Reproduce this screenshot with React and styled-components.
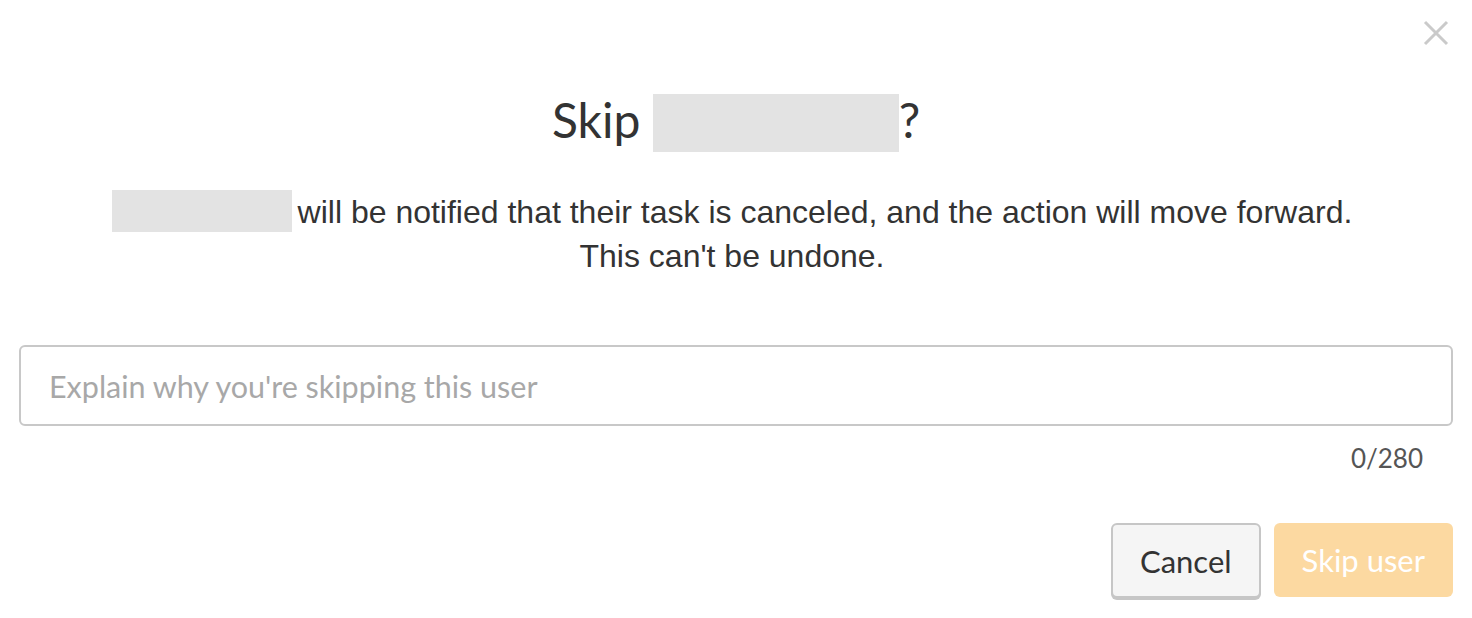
import React, { useState } from "react"
import styled, { createGlobalStyle } from "styled-components"

const Global = createGlobalStyle`
  html, body {
    margin: 0;
    padding: 0;
    background: #fff;
  }
  * {
    box-sizing: border-box;
  }
`

const Dialog = styled.div`
  position: relative;
  width: 1472px;
  height: 618px;
  padding: 0 19px;
  background: #fff;
  font-family: Lato, "Liberation Sans", sans-serif;
  color: #333;
`

const CloseButton = styled.button`
  position: absolute;
  top: 20px;
  right: 23px;
  width: 26px;
  height: 26px;
  padding: 0;
  border: none;
  background: none;
  cursor: pointer;
  svg {
    display: block;
  }
`

const Title = styled.h1`
  margin: 0;
  padding-top: 84px;
  font-family: Lato, sans-serif;
  font-weight: 400;
  font-size: 48px;
  line-height: 72px;
  text-align: center;
  color: #333;
`

const Redacted = styled.span`
  display: inline-block;
  width: ${(p) => p.$w}px;
  height: ${(p) => p.$h}px;
  margin-right: ${(p) => p.$gap || 0}px;
  vertical-align: ${(p) => p.$drop}px;
  background: #e3e3e3;
`

const Message = styled.p`
  margin: 34px 0 0;
  padding-right: 8px;
  font-family: "Liberation Sans", Arial, sans-serif;
  font-size: 32px;
  line-height: 44px;
  text-align: center;
  color: #333;
`

const Field = styled.input`
  display: block;
  width: 100%;
  height: 81px;
  margin-top: 67px;
  padding: 0 28px;
  border: 2px solid #c8c8c8;
  border-radius: 6px;
  font-family: Lato, sans-serif;
  font-size: 30.5px;
  color: #333;
  outline: none;
  &::placeholder {
    color: #a8a8a8;
  }
`

const Counter = styled.div`
  padding: 16px 30px 0 0;
  font-family: Lato, sans-serif;
  font-size: 26px;
  line-height: 32px;
  text-align: right;
  color: #555;
`

const Actions = styled.div`
  display: flex;
  justify-content: flex-end;
  gap: 13px;
  margin-top: 49px;
`

const Button = styled.button`
  height: ${(p) => (p.$primary ? 74 : 75)}px;
  padding: 0 ${(p) => (p.$primary ? 28 : 27)}px;
  border-radius: 6px;
  font-family: Lato, sans-serif;
  font-size: 31px;
  cursor: pointer;
  border: ${(p) => (p.$primary ? "none" : "2px solid #c6c6c6")};
  background: ${(p) => (p.$primary ? "#fcd9a1" : "#f5f5f5")};
  color: ${(p) => (p.$primary ? "#fff" : "#333")};
  box-shadow: ${(p) => (p.$primary ? "none" : "0 2px 0 #c6c6c6")};
`

const App = () => {
  const [reason, setReason] = useState("")
  return (
    <Dialog>
      <Global />
      <CloseButton aria-label="Close">
        <svg width="26" height="26" viewBox="0 0 26 26">
          <path d="M2 2 L24 24 M24 2 L2 24" stroke="#cacaca" strokeWidth="3" />
        </svg>
      </CloseButton>
      <Title>
        Skip <Redacted $w={246} $h={58} $drop={-14} />?
      </Title>
      <Message>
        <Redacted $w={180} $h={42} $drop={-9} $gap={-3} /> will be notified that their
        task is canceled, and the action will move forward.
        <br />
        This can't be undone.
      </Message>
      <Field
        value={reason}
        maxLength={280}
        onChange={(e) => setReason(e.target.value)}
        placeholder="Explain why you're skipping this user"
      />
      <Counter>{reason.length}/280</Counter>
      <Actions>
        <Button>Cancel</Button>
        <Button $primary disabled>
          Skip user
        </Button>
      </Actions>
    </Dialog>
  )
}

export default App
